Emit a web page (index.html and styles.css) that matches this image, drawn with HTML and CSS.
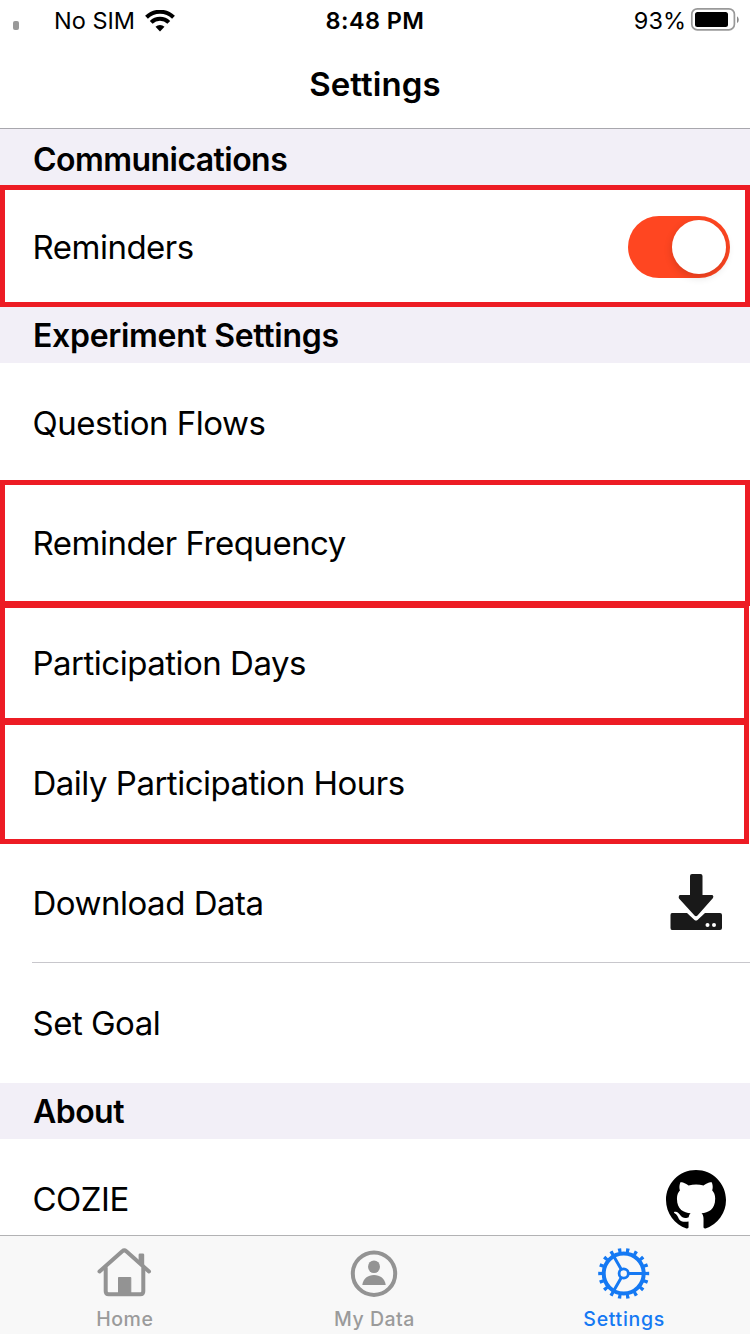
FILE: index.html
```html
<!DOCTYPE html>
<html lang="en">
<head>
<meta charset="utf-8">
<title>Settings</title>
<link rel="stylesheet" href="styles.css">
</head>
<body>
<div class="screen">
  <header class="top">
    <div class="status">
      <div class="status-left">
        <i class="signal"></i>
        <span class="carrier">No SIM</span>
        <svg class="wifi" width="30" height="22" viewBox="0 0 30 22"><g fill="none" stroke="#000" stroke-width="4"><path d="M1.5 7.2A19.3 19.3 0 0 1 28.5 7.2"/><path d="M6.2 12.4A12.5 12.5 0 0 1 23.8 12.4"/></g><path d="M10.5 16.8a6.4 6.4 0 0 1 9 0L15 21.6z"/></svg>
      </div>
      <span class="time">8:48 PM</span>
      <div class="status-right">
        <span class="percent">93%</span>
        <svg class="battery" width="49" height="24" viewBox="0 0 49 24"><rect x="1.8" y="1.8" width="42.6" height="21" rx="5.5" fill="none" stroke="#999" stroke-width="1.7"/><rect x="5" y="5" width="33" height="15" rx="2.5"/><path d="M47 9.2a4.3 4.3 0 0 1 0 7z" fill="#888"/></svg>
      </div>
    </div>
    <h1 class="title">Settings</h1>
  </header>
  <main class="list">
    <h2 class="section s-comm">Communications</h2>
    <div class="row marked m-reminders"><span>Reminders</span><span class="switch"><i class="knob"></i></span></div>
    <h2 class="section s-exp">Experiment Settings</h2>
    <div class="row"><span>Question Flows</span></div>
    <div class="row marked m-frequency"><span>Reminder Frequency</span></div>
    <div class="row marked m-days"><span>Participation Days</span></div>
    <div class="row marked m-hours"><span>Daily Participation Hours</span></div>
    <div class="row"><span>Download Data</span>
      <svg class="download" width="52" height="56" viewBox="0 0 52 56" fill="#191919"><path d="M2 39H17L24.5 46Q26 47.2 27.500 46L35 39H50Q52 39 52 41V54Q52 56 50 56H2Q.5 56 .5 54V41Q.5 39 2 39z"/><path d="M22 0H30.500Q32.500 0 32.500 2V21H42.500Q44 22.500 43 24L27.500 41.500Q26 43 24.500 41.500L9 24.500Q8 23 9.500 21H20V2Q20 0 22 0z"/><circle cx="37.500" cy="51" r="2" fill="#fff"/><circle cx="44" cy="51" r="2" fill="#fff"/></svg>
    </div>
    <div class="row divided"><span>Set Goal</span></div>
    <h2 class="section s-about">About</h2>
    <div class="row"><span>COZIE</span>
      <svg class="github" width="60" height="60" viewBox="0 0 16 16"><path fill-rule="evenodd" d="M8 0C3.58 0 0 3.58 0 8c0 3.54 2.290 6.530 5.470 7.590.4.070.55-.17.55-.38 0-.19-.01-.82-.01-1.490-2.010.37-2.530-.49-2.690-.94-.09-.23-.48-.94-.82-1.130-.28-.15-.68-.52-.01-.53.63-.01 1.080.58 1.230.82.72 1.210 1.870.87 2.330.66.07-.52.28-.87.51-1.070-1.780-.2-3.640-.89-3.640-3.950 0-.87.31-1.590.82-2.150-.08-.2-.36-1.020.08-2.120 0 0 .67-.21 2.200.82.64-.18 1.320-.27 2-.27s1.360.09 2 .27c1.530-1.040 2.200-.82 2.200-.82.44 1.100.16 1.920.08 2.120.51.56.82 1.270.82 2.150 0 3.070-1.870 3.750-3.650 3.950.29.25.54.73.54 1.480 0 1.070-.01 1.930-.01 2.200 0 .21.15.46.55.38A8.010 8.010 0 0 0 16 8c0-4.420-3.580-8-8-8z"/></svg>
    </div>
  </main>
  <nav class="tabs">
    <div class="tab">
      <svg width="56" height="54" viewBox="0 0 56 54" fill="none" stroke="#939393" stroke-width="4" stroke-linecap="round" stroke-linejoin="round"><path d="M2.500 26.500L25.300 6.200Q27.300 4.500 29.300 6.200L52 26.500"/><path d="M8.700 23V46.300Q8.700 49.300 11.700 49.300H43.300Q46.300 49.300 46.300 46.300V23"/><path d="M43 9.800H45.800V21L43 18z" fill="#939393" stroke-width="2.800"/><path d="M21.500 49V32.500H33.800V49z" fill="#939393" stroke-width="1"/></svg>
      <span class="l-home">Home</span>
    </div>
    <div class="tab">
      <svg width="56" height="54" viewBox="0 0 56 54" fill="#939393"><circle cx="28" cy="28.700" r="21.200" fill="none" stroke="#939393" stroke-width="4"/><ellipse cx="28" cy="21.700" rx="6" ry="6.300"/><path d="M16.300 40C17 33.500 22 30 28 30S39 33.500 39.700 40z"/></svg>
      <span class="l-data">My Data</span>
    </div>
    <div class="tab active">
      <svg width="56" height="54" viewBox="0 0 56 54" fill="none" stroke="#1579f3"><circle cx="27.700" cy="28.500" r="20" stroke-width="4"/><circle class="teeth" cx="27.700" cy="28.500" r="23.400" stroke-width="4.200" pathLength="72"/><circle cx="27.700" cy="28.500" r="4.600" stroke-width="2.800"/><path d="M32.700 28.500H49M25.200 24.200L17 10M25.200 32.800L17 47" stroke-width="3"/></svg>
      <span class="l-settings">Settings</span>
    </div>
  </nav>
</div>
</body>
</html>
```
FILE: styles.css
```css
* { box-sizing: border-box; }
body { margin: 0; background: #fff; color: #000; font-family: Inter, "Liberation Sans", sans-serif; }
h1, h2 { margin: 0; font-weight: 600; }
svg { display: block; flex: none; }
.screen { display: flex; flex-direction: column; width: 750px; height: 1334px; overflow: hidden; }
.top { flex: none; height: 129px; border-bottom: 1px solid #a8a7ad; }
.status { display: grid; grid-template-columns: 1fr auto 1fr; align-items: center; height: 42px; font-size: 23.500px; line-height: 42px; }
.status-left, .status-right { display: flex; align-items: center; }
.status-right { justify-content: flex-end; padding-right: 11px; }
.signal { width: 6px; height: 9px; margin: 9px 35px 0 13px; border-radius: 2px; background: #999; }
.wifi { margin: -1px 0 0 10px; }
.time { font-weight: 600; letter-spacing: .4px; }
.battery { margin: -4px 0 0 4px; }
.title { font-size: 33px; line-height: 84px; letter-spacing: .1px; text-align: center; }
.list { flex: 1; min-height: 0; overflow: hidden; padding-top: 2px; background: #f2eff7; }
.section { height: 56px; padding: 1px 0 0 33px; background: #f2eff7; font-size: 32px; line-height: 56px; }
.s-comm { letter-spacing: -.55px; }
.s-exp { letter-spacing: -.3px; }
.s-about { letter-spacing: -.55px; }
.row { position: relative; display: flex; align-items: center; justify-content: space-between; height: 120px; padding: 0 20px 0 32.500px; background: #fff; font-size: 33px; line-height: 40px; letter-spacing: -.5px; }
.marked::after { content: ""; position: absolute; z-index: 1; left: 0; right: 0; border: 5px solid #ed1c24; }
.m-reminders::after { top: -2px; bottom: 0; }
.m-frequency::after { top: -3px; bottom: -3px; }
.m-days::after { top: 0; bottom: 0; right: 1px; }
.m-hours::after { top: -3px; bottom: -1px; right: 1px; }
.divided::before { content: ""; position: absolute; top: -1px; left: 32px; right: 0; height: 1px; background: #c8c7cc; }
.switch { display: flex; justify-content: flex-end; width: 102px; height: 62px; padding: 4px; border-radius: 31px; background: #ff4621; }
.knob { width: 54px; height: 54px; border-radius: 50%; background: #fff; box-shadow: 0 3px 8px rgba(0, 0, 0, .16); }
.download { margin: -2px 8px 0 0; }
.github { margin: 1px 4px 0 0; }
.tabs { flex: none; display: grid; grid-template-columns: repeat(3, 1fr); height: 99px; padding-right: 1px; border-top: 1px solid #b2b2b4; background: #f8f8f8; }
.tab { display: flex; flex-direction: column; align-items: center; padding-top: 9px; color: #9b9b9b; font-size: 19.500px; font-weight: 500; line-height: 24px; letter-spacing: .5px; }
.tab svg { margin-bottom: 8px; }
.active { color: #1579f3; letter-spacing: .7px; }
.teeth { stroke-dasharray: 1.600 2.400; stroke-dashoffset: .8; }
```
